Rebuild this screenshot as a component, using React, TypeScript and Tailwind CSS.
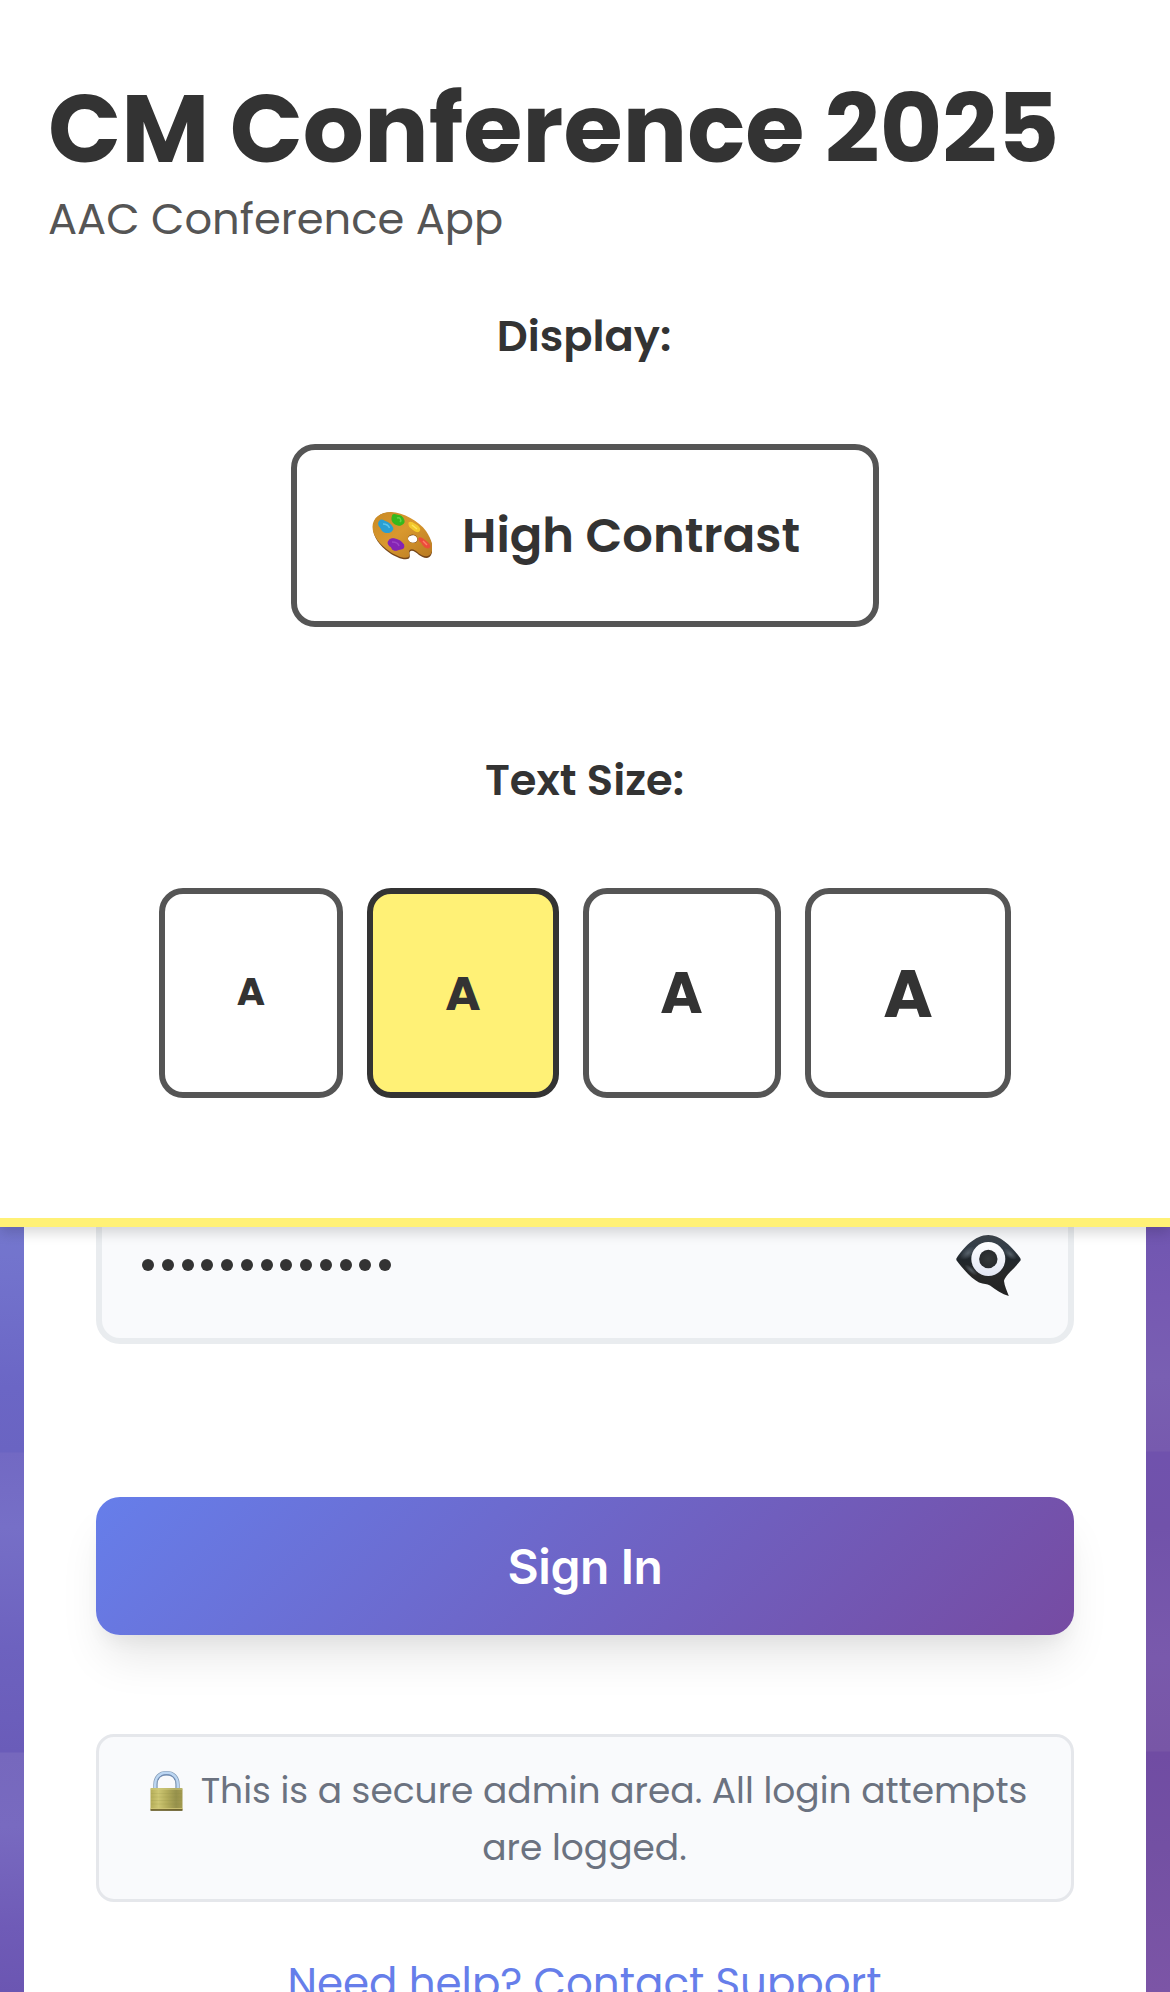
import React from 'react';

const sizes = [
  { width: 'w-[184px]', text: 'text-[38.4px] pb-[2px]', active: false },
  { width: 'w-[192px]', text: 'text-[48px] pt-[2px]', active: true },
  { width: 'w-[198px]', text: 'text-[57.6px] pt-[2px] pr-[1px]', active: false },
  { width: 'w-[206px]', text: 'text-[67.2px] pt-[2px]', active: false },
];

function Palette() {
  return (
    <svg viewBox="0 0 60 48" className="h-[48px] w-[60px]" aria-hidden="true">
      <defs>
        <linearGradient id="wood" x1="0" y1="0" x2="1" y2="1">
          <stop offset="0" stopColor="#c98a24" />
          <stop offset=".45" stopColor="#d9982e" />
          <stop offset="1" stopColor="#b87a22" />
        </linearGradient>
      </defs>
      <path d="M1 16C1 6 9 0 19 0.6C31 1.500 47 10.500 54 20.500C59 28 62 35 59.500 42C57.500 48 51 46 47 43C43.500 40 40 37.500 38 39.500C36.500 41.500 39 44.500 37 46.500C33 49 24 45.500 17 40.500C8 34 1 25 1 16ZM36 27.500C36.500 30 39.500 31 42.500 30.500C45.500 29.800 46 27 44.500 25C43 23 40 23 38 24C36.300 24.800 35.800 26 36 27.500Z" fill="#75461a" fillRule="evenodd" />
      <path d="M.5 15C.5 5.500 9 0 19 0C31 .5 47 9 54 19C59 26.500 62 34 59.500 40.500C57.500 46 51 44.500 47 41.500C43.500 38.500 40 36 37.500 38.200C36 40.500 38.500 43 36.500 45C33 47.500 24 44 17 39C8 32.500 .5 24 .5 15ZM36 27C36.500 30 39.500 31.500 42.500 31C45.500 30.300 46.300 27.500 44.800 25C43 22.500 40 22 38 23.200C36.300 24.300 35.800 25.500 36 27Z" fill="url(#wood)" fillRule="evenodd" />
      <path d="M21 3C23 1.500 25 4 27 3.500C30 4 32 7 32 10C31 13 27 14 24.500 12.500C22 12 20 9 20 7C20 5 20.500 4 21 3Z" fill="#35b91d" stroke="#35b91d" strokeWidth="1.200" />
      <path d="M25 6C28 5 30 8 28 10" fill="none" stroke="#62d344" strokeWidth="1.500" />
      <path d="M8 9C10 6.500 12 10 15 10.500C18 12 21 15 20.500 17.500C19 20.500 15 21 12 19.500C9 18 10 16 7.500 14C6.500 12 7 10 8 9Z" fill="#2b9fd2" stroke="#2b9fd2" strokeWidth="1.500" />
      <path d="M11 12Q16 12 17.500 16" fill="none" stroke="#5cc4ea" strokeWidth="1.500" />
      <path d="M37 11C39 9 42 12 45 13.500C48 16 48.500 18 46.500 19.500C43 20 42 18 39.500 16C37 15 37 13 37 11Z" fill="#f3c92c" stroke="#f3c92c" strokeWidth="1.200" />
      <path d="M40 13L45 17" stroke="#ffe45c" strokeWidth="1.500" />
      <path d="M47 26C50 25 52 28 55 30C58 32 59 35 57 36C54 36.500 51 34.500 50 31C48 30 46.500 28 47 26Z" fill="#ec4c3b" stroke="#ec4c3b" strokeWidth=".8" />
      <path d="M51 29L55 33" stroke="#ff7d68" strokeWidth="1.500" />
      <path d="M17 29C18 26 21 27 23 27C26 28 29 29 30 31C33 33 32 37 29 37C26 37 25 39 22 38C19 37 21 35 18 34C16 32 16 30 17 29Z" fill="#8524b4" stroke="#8524b4" strokeWidth="1.200" />
      <path d="M20 30Q26 30 27 34" fill="none" stroke="#9c43c6" strokeWidth="1.500" />
    </svg>
  );
}

function EyeBubble() {
  return (
    <svg viewBox="0 0 65 62" className="h-[62px] w-[65px]" aria-hidden="true">
      <defs>
        <linearGradient id="lid" x1="0" y1="0" x2="0" y2="1">
          <stop offset="0" stopColor="#3d444b" />
          <stop offset=".22" stopColor="#333d47" />
          <stop offset=".4" stopColor="#20262b" />
          <stop offset=".65" stopColor="#282828" />
          <stop offset="1" stopColor="#222" />
        </linearGradient>
        <linearGradient id="white" x1="0" y1="0" x2="0" y2="1">
          <stop offset="0" stopColor="#fff" />
          <stop offset="1" stopColor="#e2e6f3" />
        </linearGradient>
        <radialGradient id="pupil">
          <stop offset="0" stopColor="#343839" />
          <stop offset="1" stopColor="#272a2c" />
        </radialGradient>
        <radialGradient id="glow">
          <stop offset="0" stopColor="#75808a" stopOpacity=".6" />
          <stop offset="1" stopColor="#75808a" stopOpacity="0" />
        </radialGradient>
      </defs>
      <path d="M.4 23.500Q0 24.800 1 26C7 34 16 44 23 47.500C28 49.500 31 48.500 34 50.500C40 55 46 59 52.800 61C51 56 48.500 51 48 46C48.500 41 60 32 64.500 25.500Q65 24.500 64.200 23C57 13 45 0 32.300 0C19 0 7 13 .4 23.500Z" fill="url(#lid)" />
      <ellipse cx="12" cy="18" rx="9" ry="5" fill="url(#glow)" transform="rotate(-38 12 18)" />
      <ellipse cx="54" cy="19" rx="8" ry="4" fill="url(#glow)" transform="rotate(38 54 19)" />
      <ellipse cx="15" cy="35" rx="8" ry="3" fill="url(#glow)" transform="rotate(40 15 35)" />
      <circle cx="32.300" cy="24" r="17" fill="url(#white)" />
      <circle cx="32.300" cy="24" r="9.200" fill="url(#pupil)" />
    </svg>
  );
}

function Padlock() {
  return (
    <svg viewBox="0 0 33 40" className="h-[40px] w-[33px]" aria-hidden="true">
      <defs>
        <linearGradient id="brass" x1="0" y1="0" x2="1" y2="0">
          <stop offset="0" stopColor="#b5ad58" />
          <stop offset=".25" stopColor="#cdc672" />
          <stop offset=".5" stopColor="#b5ae5c" />
          <stop offset=".8" stopColor="#96914c" />
          <stop offset="1" stopColor="#a39b50" />
        </linearGradient>
      </defs>
      <path d="M5.500 18V13.500C5.500 6 10 2.200 16.500 2.200S27.500 6 27.500 13.500V18" fill="none" stroke="#849bb5" strokeWidth="4.400" />
      <path d="M5.200 18V13.500C5.200 6 10 1.800 16.500 1.800S27.800 6 27.800 13.500V18" fill="none" stroke="#bcd6f2" strokeWidth="2.400" />
      <path d="M8 9C10 4.500 13 3.800 16.500 3.800S23 4.500 25 9" fill="none" stroke="#6d89b5" strokeWidth="1" />
      <rect x=".5" y="17" width="32" height="22.500" rx="1" fill="url(#brass)" />
      <path d="M.5 18H32.500" stroke="#d0cb80" strokeWidth="1.200" />
      <path d="M1 22.500H32M1 26H32M1 29.500H32M1 33H32" stroke="#89833b" strokeOpacity=".15" />
      <path d="M.5 37.500H32.500" stroke="#d3c878" strokeWidth=".8" />
      <path d="M.5 39H32.500" stroke="#5f5324" strokeWidth="1.600" />
    </svg>
  );
}

export default function App() {
  return (
    <div className="flex h-[1992px] w-[1170px] flex-col overflow-hidden bg-white font-['Poppins','Inter',sans-serif] text-[#333]">
      <header className="relative z-10 flex h-[1227px] shrink-0 flex-col border-b-[9px] border-[#fff176] bg-white pt-[71px] shadow-[0_6px_12px_rgba(0,0,0,0.15)]">
        <h1 className="px-12 text-[96px] leading-[115px] font-bold whitespace-nowrap">CM Conference 2025</h1>
        <p className="px-12 pt-[1px] text-[43.2px] leading-[65px] text-[#555]">AAC Conference App</p>

        <section className="flex flex-col items-center pt-[52px]">
          <h2 className="pr-[2px] text-[43.2px] leading-[65px] font-semibold">Display:</h2>
          <button className="mt-[75px] flex h-[183px] w-[588px] items-center rounded-[24px] border-[6px] border-[#555] pl-[75px] text-[48px] leading-[72px] font-semibold whitespace-nowrap">
            <Palette />
            <span className="ml-[30px]">High Contrast</span>
          </button>
        </section>

        <section className="flex flex-col items-center pt-[121px]">
          <h2 className="pr-[1px] text-[43.2px] leading-[65px] font-semibold">Text Size:</h2>
          <div className="mt-[75px] flex gap-6">
            {sizes.map((s) => (
              <button
                key={s.width}
                className={`flex h-[210px] items-center justify-center rounded-[24px] border-[6px] leading-none font-bold ${s.width} ${s.text} ${s.active ? 'border-[#333] bg-[#fff176]' : 'border-[#555] bg-white'}`}
              >
                A
              </button>
            ))}
          </div>
        </section>
      </header>

      <main className="flex min-h-0 flex-1">
        <div className="w-6 shrink-0 bg-[linear-gradient(180deg,#7477ce_0px,#7272cc_50px,#6b66c5_160px,#6a64c2_225px,#7269c3_226px,#766fc7_300px,#6d62bf_420px,#6a5cb9_525px,#7668bd_526px,#786ac0_600px,#6f5bb7_700px,#6b56b2_765px)]" />
        <div className="flex flex-1 flex-col items-center px-[72px]">
          <div className="flex h-[117px] w-full shrink-0 items-start justify-between rounded-b-[24px] border-[6px] border-t-0 border-[#e9ecef] bg-[#f9fafc] pr-[47px] pl-[40px]">
            <div className="flex gap-[7.75px] pt-[32px]">
              {Array.from({ length: 13 }, (_, i) => (
                <span key={i} className="size-3 rounded-full bg-[#333]" />
              ))}
            </div>
            <button className="pt-[8px]" aria-label="Show password">
              <EyeBubble />
            </button>
          </div>

          <button className="mt-[153px] flex h-[138px] w-full shrink-0 items-center justify-center rounded-[24px] bg-[linear-gradient(135deg,#667eea_0%,#764ba2_100%)] pt-[2px] font-['Inter',sans-serif] text-[48px] leading-[58px] font-semibold tracking-[-0.4px] text-white shadow-[0_30px_45px_-9px_rgba(0,0,0,0.1),0_12px_18px_-6px_rgba(0,0,0,0.05)]">
            Sign In
          </button>

          <div className="mt-[99px] flex h-[168px] w-full shrink-0 flex-col items-center justify-center rounded-[18px] border-[3px] border-[#e5e7eb] bg-[#f9fafc] pt-[2px] text-[36px] leading-[57px] whitespace-nowrap text-[#6b7280]">
            <div className="flex items-center pl-[7px]">
              <Padlock />
              <span className="ml-[18px]">This is a secure admin area. All login attempts</span>
            </div>
            <div className="pr-[1px]">are logged.</div>
          </div>

          <a className="mt-[48px] shrink-0 pr-[1px] text-[42px] leading-[67px] whitespace-nowrap text-[#667eea]">Need help? Contact Support</a>
        </div>
        <div className="w-6 shrink-0 bg-[linear-gradient(180deg,#7056b1_0px,#7659b2_70px,#795fb2_150px,#775aae_224px,#7052ad_225px,#7152aa_300px,#7959ac_430px,#7856a6_524px,#704ca3_525px,#7350a3_620px,#7c55a6_765px)]" />
      </main>
    </div>
  );
}
